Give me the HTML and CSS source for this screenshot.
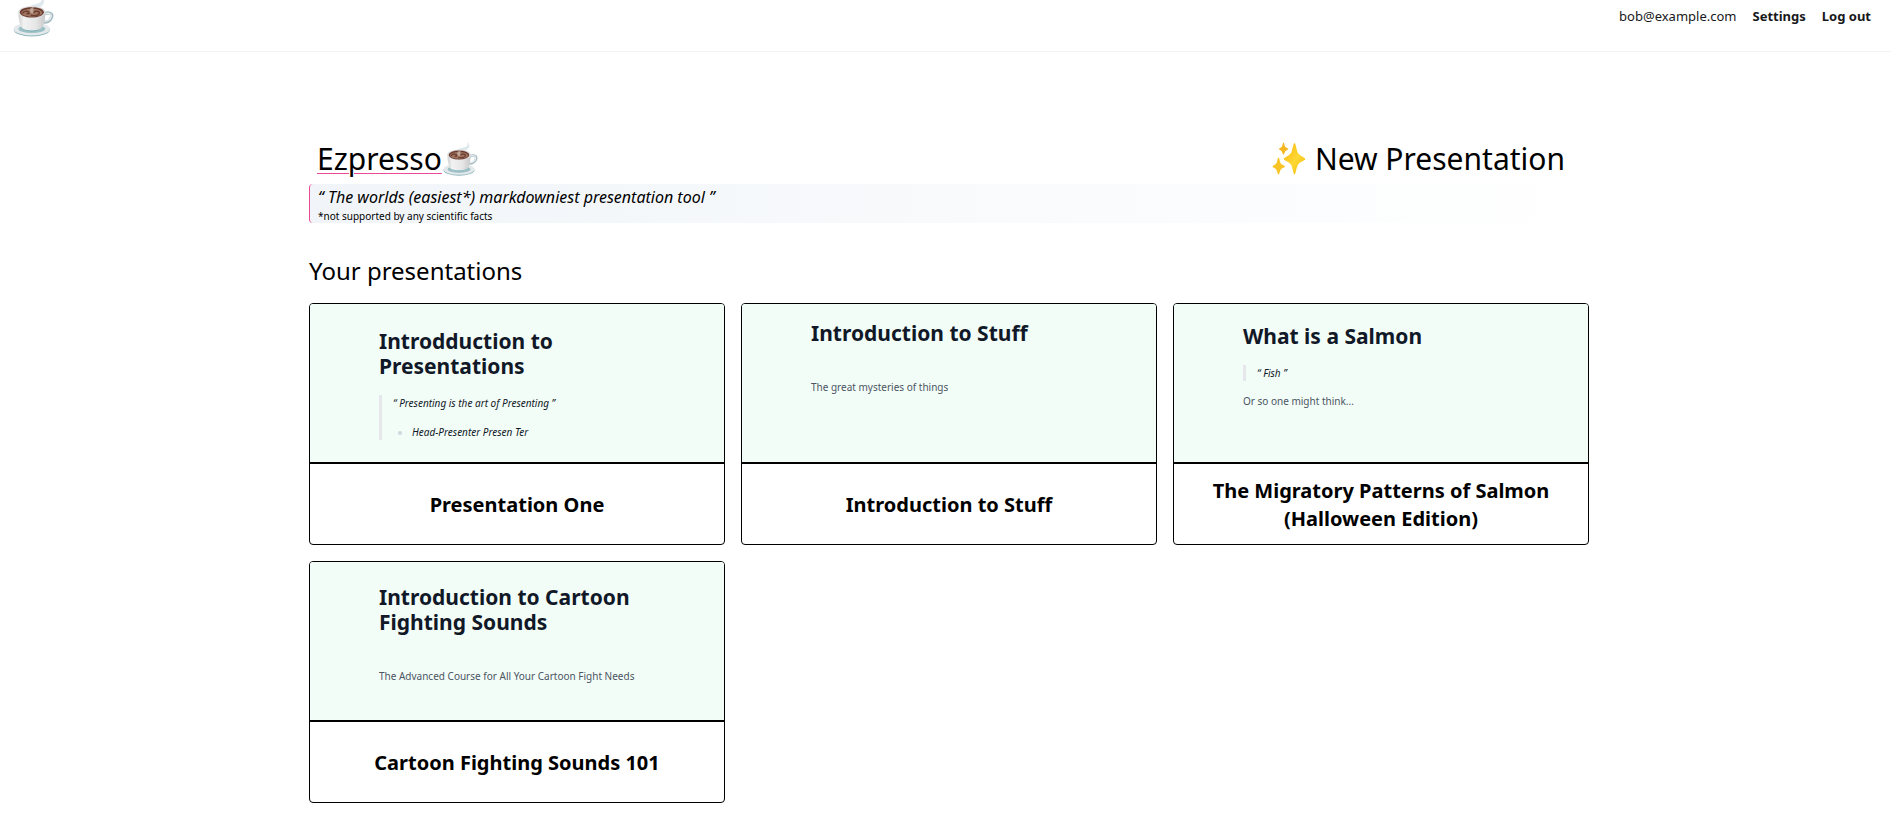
FILE: index.html
```html
<!DOCTYPE html>
<html lang="en">
<head>
<meta charset="utf-8">
<meta name="viewport" content="width=device-width, initial-scale=1">
<title>Ezpresso</title>
<link rel="stylesheet" href="styles.css">
</head>
<body>
<svg width="0" height="0" class="defs" aria-hidden="true">
  <defs>
    <linearGradient id="cup-body" x1="0" x2="1"><stop offset="0" stop-color="#d2d2d2"/><stop offset=".2" stop-color="#f2f2f2"/><stop offset=".65" stop-color="#e6e6e6"/><stop offset="1" stop-color="#c8c8c8"/></linearGradient>
    <linearGradient id="star" x1="0" x2="1" y1="0" y2="1"><stop offset=".2" stop-color="#fcc21b"/><stop offset=".55" stop-color="#fdd835"/><stop offset="1" stop-color="#f4b400"/></linearGradient>
    <symbol id="coffee" viewBox="0 0 36 36">
      <path d="M15.500 13C14 9 16 7.500 20 7C25 6 26.500 4 25 1C29 3 28 8 23 10C20 11 18.500 12 18.500 14Z" fill="#dfe9ed"/>
      <ellipse cx="17" cy="29" rx="15.500" ry="5.800" fill="#8fb6bd"/>
      <ellipse cx="17" cy="28.300" rx="15.500" ry="5.500" fill="#e3e9eb"/>
      <ellipse cx="17" cy="28.200" rx="11.500" ry="3.600" fill="#9cc0c6"/>
      <path d="M27 16C31 13 35 15 34 18C33 22 29 23 26 22" fill="none" stroke="#a4bcc2" stroke-width="2.600"/>
      <path d="M27 16C31 13.500 34 15 33.500 18C32.500 21 29 22 26 21.500" fill="none" stroke="#e5eaec" stroke-width="1.300"/>
      <path d="M5.500 14C5.500 21 6.500 26 10 28.500C13 30.500 21 30.500 24 28.500C27.500 26 28.500 21 28.500 14Z" fill="url(#cup-body)"/>
      <path d="M9 27.800C13 30.200 21 30.200 25 27.800C22 31 12 31 9 27.800Z" fill="#5fa3ad"/>
      <ellipse cx="17" cy="13.800" rx="11.700" ry="5.300" fill="#dedede"/>
      <ellipse cx="17" cy="14" rx="10.300" ry="4.500" fill="#6b3d31"/>
      <ellipse cx="17" cy="14.400" rx="9" ry="3.400" fill="#a07661"/>
      <path d="M9 15C10 13 13 12.500 14.500 14C15.500 15.500 13 15.500 12.500 14.800M16 16.500C20 17.500 24 16 23.500 14C22 12.500 18.500 13 19 14.500" fill="none" stroke="#6b3d31" stroke-width="1.200"/>
      <path d="M15.500 13.500C15 10 17 9.500 19 9C18 11 18.500 12 18 15C17 15 16 14.500 15.500 13.500Z" fill="#dcd0ca" opacity=".55"/>
    </symbol>
    <symbol id="sparkles" viewBox="0 0 36 36">
      <path fill="url(#star)" d="M23.500 2C24.500 2 25 6 26.500 11C27.500 14.500 34 16.500 34.500 18C34 19.500 28 21 26.500 24.500C25 29 24.500 33.500 23.500 33.500C22.500 33.500 22 29 20.500 24.500C19 21 13 19.500 12.500 18C13 16.500 19.500 14.500 20.500 11C22 6 22.500 2 23.500 2Z"/>
      <path fill="#f9c526" d="M7.500 16.500C8.500 16.500 8.800 21 9.800 22.500C11 24 14 24.500 14 25.500C14 26.500 11 26.800 9.800 28.500C8.800 30 8.500 33.500 7.500 33.500C6.500 33.500 6.300 30 5.300 28.500C4 26.800 1.500 26.500 1.500 25.500C1.500 24.500 4 24 5.300 22.500C6.300 21 6.500 16.500 7.500 16.500Z"/>
      <path fill="#f5b71f" d="M12.500 1.500C13.300 1.500 13.500 5 14.300 6C15.500 7 17.300 7.200 17.300 8C17.300 8.800 15.300 9 14.300 10.200C13.500 11.500 13.300 13.500 12.500 13.500C11.700 13.500 11.500 11.500 10.700 10.200C9.700 9 8 8.800 8 8C8 7.200 9.500 7 10.700 6C11.500 5 11.700 1.500 12.500 1.500Z"/>
    </symbol>
  </defs>
</svg>

<header class="topbar">
  <a class="topbar-logo" href="#" aria-label="Home"><svg class="logo-cup"><use href="#coffee"/></svg></a>
  <nav class="topbar-nav">
    <span class="topbar-email">bob@example.com</span>
    <a href="#">Settings</a>
    <a href="#">Log out</a>
  </nav>
</header>

<main class="page">
  <div class="hero">
    <h1 class="brand"><span class="brand-name">Ezpresso</span><svg class="emoji" aria-hidden="true"><use href="#coffee"/></svg></h1>
    <a class="new-link" href="#"><svg class="emoji" aria-hidden="true"><use href="#sparkles"/></svg>New Presentation</a>
  </div>
  <div class="tagline">
    <p class="tagline-quote">“ The worlds (easiest*) markdowniest presentation tool ”</p>
    <p class="tagline-note">*not supported by any scientific facts</p>
  </div>

  <h2 class="section-title">Your presentations</h2>
  <div class="grid">
    <a class="card" href="#">
      <div class="preview preview-tall">
        <h3>Introdduction to Presentations</h3>
        <blockquote>
          <p>“ Presenting is the art of Presenting ”</p>
          <ul><li>Head-Presenter Presen Ter</li></ul>
        </blockquote>
      </div>
      <div class="card-title">Presentation One</div>
    </a>
    <a class="card" href="#">
      <div class="preview">
        <h3>Introduction to Stuff</h3>
        <p class="lead">The great mysteries of things</p>
      </div>
      <div class="card-title">Introduction to Stuff</div>
    </a>
    <a class="card" href="#">
      <div class="preview preview-quote">
        <h3>What is a Salmon</h3>
        <blockquote><p>“ Fish ”</p></blockquote>
        <p class="after-quote">Or so one might think...</p>
      </div>
      <div class="card-title">The Migratory Patterns of Salmon (Halloween Edition)</div>
    </a>
    <a class="card" href="#">
      <div class="preview preview-two-line">
        <h3>Introduction to Cartoon Fighting Sounds</h3>
        <p class="lead">The Advanced Course for All Your Cartoon Fight Needs</p>
      </div>
      <div class="card-title">Cartoon Fighting Sounds 101</div>
    </a>
  </div>
</main>
</body>
</html>
```
FILE: styles.css
```css
* {
  box-sizing: border-box;
}

body {
  margin: 0;
  background: #fff;
  color: #000;
  font-family: "Noto Sans", sans-serif;
  font-size: 16px;
  line-height: 24px;
}

h1, h2, h3, p, ul, blockquote {
  margin: 0;
  padding: 0;
}

a {
  color: inherit;
  text-decoration: none;
}

.defs {
  position: absolute;
}

.topbar {
  display: flex;
  justify-content: space-between;
  align-items: flex-start;
  height: 52px;
  padding: 0 20px 0 12px;
  border-bottom: 1px solid #f4f4f5;
}

.topbar-logo {
  display: block;
  margin-top: -4px;
}

.logo-cup {
  display: block;
  width: 42px;
  height: 42px;
}

.topbar-nav {
  display: flex;
  gap: 16px;
  padding-top: 4px;
  color: #18181b;
  font-size: 13px;
  line-height: 24px;
}

.topbar-nav a {
  font-weight: 700;
}

.page {
  max-width: 1287px;
  margin: 0 auto;
  padding: 89px 0 32px 7px;
}

.hero {
  display: flex;
  justify-content: space-between;
  padding: 0 24px 0 8px;
  margin-bottom: 7px;
  font-size: 30px;
  line-height: 36px;
}

.brand {
  display: flex;
  font-size: 30px;
  font-weight: 400;
}

.brand-name {
  text-decoration: underline;
  text-decoration-color: #ec4899;
  text-decoration-thickness: 1px;
  text-underline-offset: 3px;
}

.emoji {
  display: block;
  width: 36px;
  height: 36px;
}

.new-link {
  display: flex;
  gap: 8px;
}

.tagline {
  padding: 1px 0 0 8px;
  border-left: 1px solid #ec4899;
  border-radius: 4px;
  background: linear-gradient(to right, #f1f5f9, #fff);
}

.tagline-quote {
  font-style: italic;
}

.tagline-note {
  font-size: 10px;
  line-height: 14px;
}

.section-title {
  margin: 32px 0 16px;
  font-size: 24px;
  font-weight: 400;
  line-height: 32px;
}

.grid {
  display: grid;
  grid-template-columns: repeat(3, 1fr);
  gap: 16px;
}

.card {
  display: flex;
  flex-direction: column;
  overflow: hidden;
  border: 1px solid #000;
  border-radius: 4px;
}

.preview {
  height: 160px;
  padding: 17px calc(100% / 6) 0;
  border-bottom: 2px solid #000;
  background: #f3fdf8;
  color: #4b5563;
  font-size: 10px;
  line-height: 16px;
}

.preview-tall {
  padding-top: 25px;
}

.preview-quote {
  padding-top: 20px;
}

.preview-two-line {
  padding-top: 23px;
}

.preview h3 {
  color: #111827;
  font-size: 21px;
  font-weight: 700;
  line-height: 25px;
}

.preview blockquote {
  margin-top: 16px;
  padding-left: 11px;
  border-left: 3px solid #e5e7eb;
  color: #111827;
  font-style: italic;
}

.preview ul {
  margin-top: 13px;
  padding-left: 19px;
}

.preview li::marker {
  color: #d1d5db;
}

.lead {
  margin-top: 33px;
}

.after-quote {
  margin-top: 12px;
}

.card-title {
  display: flex;
  flex: 1;
  align-items: center;
  justify-content: center;
  min-height: 80px;
  padding: 13px 32px 11px;
  font-size: 20px;
  font-weight: 700;
  line-height: 28px;
  text-align: center;
}
```
